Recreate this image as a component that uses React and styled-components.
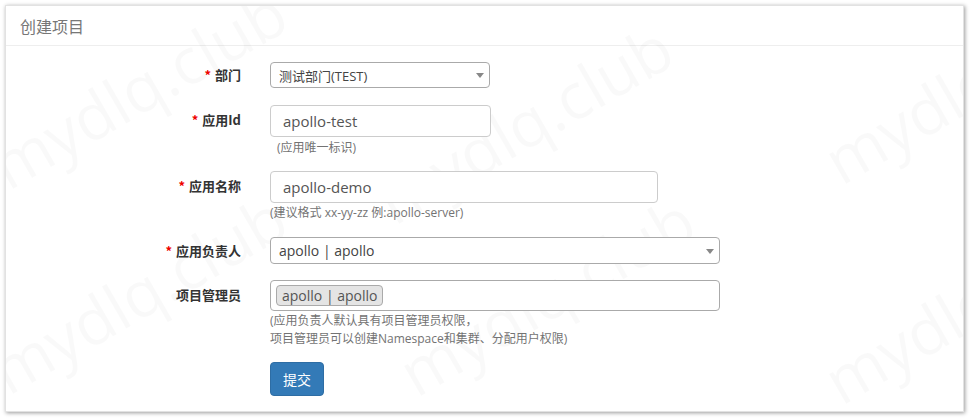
import React from "react";
import styled, { createGlobalStyle } from "styled-components";

const Global = createGlobalStyle`
  html, body { margin: 0; padding: 0; background: #fff; }
  body { font-family: "Open Sans", "Noto Sans CJK SC", sans-serif; color: #333; }
  * { box-sizing: border-box; }
`;

const Page = styled.div`
  padding: 5px 6px 7px 5px;
`;

const Panel = styled.div`
  position: relative;
  overflow: hidden;
  width: 959px;
  height: 407px;
  background: #fff;
  border: 1px solid #e2e2e2;
  box-shadow: 1px 1px 4px rgba(0, 0, 0, 0.4);
`;

const Header = styled.div`
  height: 40px;
  padding: 0 14px;
  display: flex;
  align-items: center;
  border-bottom: 1px solid #eee;
  font-size: 16px;
  color: #777;
  font-family: "Noto Sans CJK SC", sans-serif;
`;

const Body = styled.div`
  position: relative;
  z-index: 1;
  padding: 16px 0 0 0;
`;

const Row = styled.div`
  display: grid;
  grid-template-columns: 235px 1fr;
  column-gap: 29px;
  margin-bottom: ${(p) => p.$mb}px;
`;

const Label = styled.div`
  text-align: right;
  font-size: 13px;
  font-weight: bold;
  line-height: 20px;
  color: #333;
  padding-top: ${(p) => p.$pt}px;
  font-family: "Noto Sans CJK SC", sans-serif;
`;

const Star = styled.span`
  color: #e00;
  margin-right: 4px;
`;

const Control = styled.div`
  display: flex;
  flex-direction: column;
  align-items: flex-start;
`;

const Select = styled.div`
  position: relative;
  width: ${(p) => p.$w}px;
  height: ${(p) => p.$h}px;
  border: 1px solid #aaa;
  border-radius: 4px;
  background: #fff;
  display: flex;
  align-items: center;
  padding-left: 8px;
  font-size: ${(p) => p.$fs}px;
  color: #444;
  font-family: "Open Sans", "Noto Sans CJK SC", sans-serif;
`;

const Arrow = styled.span`
  position: absolute;
  right: 5px;
  top: 50%;
  margin-top: -2px;
  width: 0;
  height: 0;
  border-left: 4px solid transparent;
  border-right: 4px solid transparent;
  border-top: 5px solid #888;
`;

const Input = styled.div`
  width: ${(p) => p.$w}px;
  height: 32px;
  border: 1px solid #ccc;
  border-radius: 4px;
  display: flex;
  align-items: center;
  padding-left: 12px;
  font-size: 15px;
  color: #555;
  background: #fff;
  font-family: "Open Sans", sans-serif;
`;

const Help = styled.div`
  margin-top: ${(p) => p.$mt}px;
  padding-left: ${(p) => p.$pl || 0}px;
  font-size: 12px;
  line-height: ${(p) => p.$lh || 17}px;
  color: #737373;
  font-family: "Open Sans", "Noto Sans CJK SC", sans-serif;
`;

const MultiBox = styled.div`
  width: 450px;
  height: 31px;
  border: 1px solid #aaa;
  border-radius: 4px;
  display: flex;
  align-items: center;
  padding-left: 5px;
  background: #fff;
`;

const Tag = styled.span`
  height: 21px;
  display: inline-flex;
  align-items: center;
  padding: 0 5px;
  background: #e4e4e4;
  border: 1px solid #aaa;
  border-radius: 4px;
  font-size: 14px;
  color: #555;
  font-family: "Open Sans", sans-serif;
`;

const Button = styled.button`
  width: 54px;
  height: 34px;
  border: 1px solid #2e6da4;
  border-radius: 4px;
  background: #337ab7;
  color: #fff;
  font-size: 14px;
  font-family: "Noto Sans CJK SC", sans-serif;
  padding: 0;
  cursor: pointer;
`;

const Watermark = styled.span`
  position: absolute;
  left: ${(p) => p.$x}px;
  top: ${(p) => p.$y}px;
  transform: rotate(-30deg);
  transform-origin: left bottom;
  font-size: 64px;
  font-family: "Open Sans", sans-serif;
  color: rgba(0, 0, 0, 0.025);
  white-space: nowrap;
  pointer-events: none;
  z-index: 0;
`;

const marks = [
  { x: 12, y: 115 },
  { x: 398, y: 150 },
  { x: 845, y: 110 },
  { x: 12, y: 320 },
  { x: 420, y: 322 },
  { x: 845, y: 330 },
];

export default function App() {
  return (
    <>
      <Global />
      <Page>
        <Panel>
          {marks.map((m, i) => (
            <Watermark key={i} $x={m.x} $y={m.y} aria-hidden="true">
              mydlq.club
            </Watermark>
          ))}
          <Header>创建项目</Header>
          <Body>
            <Row $mb={17}>
              <Label $pt={3}>
                <Star>*</Star>部门
              </Label>
              <Control>
                <Select $w={220} $h={26} $fs={13}>
                  测试部门(TEST)
                  <Arrow />
                </Select>
              </Control>
            </Row>
            <Row $mb={15}>
              <Label $pt={5}>
                <Star>*</Star>应用Id
              </Label>
              <Control>
                <Input $w={221}>apollo-test</Input>
                <Help $mt={2} $pl={7}>(应用唯一标识)</Help>
              </Control>
            </Row>
            <Row $mb={16}>
              <Label $pt={5}>
                <Star>*</Star>应用名称
              </Label>
              <Control>
                <Input $w={388}>apollo-demo</Input>
                <Help $mt={1}>(建议格式 xx-yy-zz 例:apollo-server)</Help>
              </Control>
            </Row>
            <Row $mb={16}>
              <Label $pt={4}>
                <Star>*</Star>应用负责人
              </Label>
              <Control>
                <Select $w={450} $h={27} $fs={14}>
                  apollo | apollo
                  <Arrow />
                </Select>
              </Control>
            </Row>
            <Row $mb={14}>
              <Label $pt={5}>项目管理员</Label>
              <Control>
                <MultiBox>
                  <Tag>apollo | apollo</Tag>
                </MultiBox>
                <Help $mt={1} $lh={18}>
                  (应用负责人默认具有项目管理员权限，
                  <br />
                  项目管理员可以创建Namespace和集群、分配用户权限)
                </Help>
              </Control>
            </Row>
            <Row $mb={0}>
              <div />
              <Control>
                <Button>提交</Button>
              </Control>
            </Row>
          </Body>
        </Panel>
      </Page>
    </>
  );
}
